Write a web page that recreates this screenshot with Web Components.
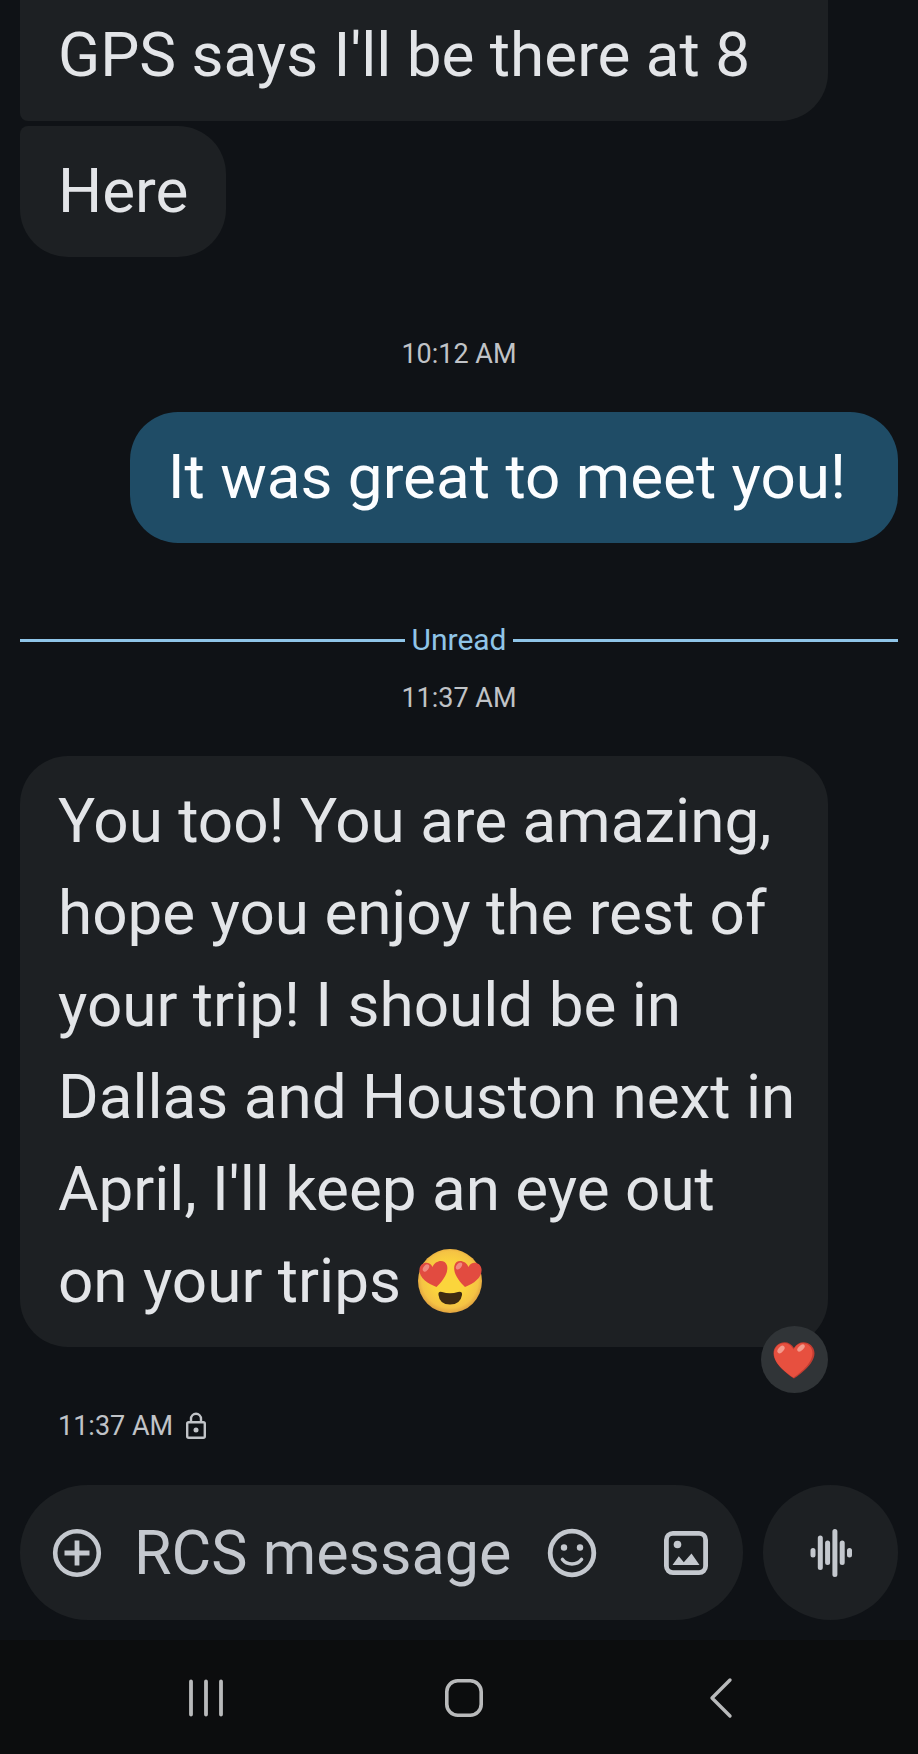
<!DOCTYPE html>
<html lang="en">
<head>
<meta charset="UTF-8">
<meta name="viewport" content="width=device-width, initial-scale=1.0">
<title>Messages</title>
<style>
    body {
        margin: 0;
        background: #0f1216;
        color: #e3e5e8;
        font-family: Roboto, "Liberation Sans", sans-serif;
    }
</style>
</head>
<body>
<chat-screen>
    <chat-bubble class="long joined-above joined-below">GPS says I'll be there at 8</chat-bubble>
    <chat-bubble class="joined-above">Here</chat-bubble>
    <chat-time class="section">10:12 AM</chat-time>
    <chat-bubble class="sent">It was great to meet you!</chat-bubble>
    <unread-divider>Unread</unread-divider>
    <chat-time>11:37 AM</chat-time>
    <chat-bubble class="long">You too! You are amazing, hope you enjoy the rest of your trip! I should be in Dallas and Houston next in April, I'll keep an eye out<br>on your trips <heart-eyes></heart-eyes><heart-reaction slot="reaction"></heart-reaction></chat-bubble>
    <message-status>11:37 AM</message-status>
    <message-composer slot="composer"></message-composer>
    <system-nav slot="nav"></system-nav>
</chat-screen>

<script>
class ChatScreen extends HTMLElement {
    connectedCallback() {
        this.attachShadow({ mode: 'open' });
        this.shadowRoot.innerHTML = `
            <style>
                :host {
                    display: flex;
                    flex-direction: column;
                    height: 100vh;
                    overflow: hidden;
                }
                main {
                    flex: 1;
                    min-height: 0;
                    display: flex;
                    flex-direction: column;
                    justify-content: flex-end;
                    padding: 0 20px;
                }
            </style>
            <main><slot></slot></main>
            <slot name="composer"></slot>
            <slot name="nav"></slot>
        `;
    }
}

class ChatBubble extends HTMLElement {
    connectedCallback() {
        this.attachShadow({ mode: 'open' });
        this.shadowRoot.innerHTML = `
            <style>
                :host {
                    display: block;
                    flex-shrink: 0;
                    box-sizing: border-box;
                    position: relative;
                    align-self: flex-start;
                    max-width: 92%;
                    padding: 19px 38px 20px;
                    border-radius: 48px;
                    background: #1d2023;
                    font-size: 62px;
                    line-height: 92px;
                }
                :host(.long) {
                    width: 92%;
                    padding-right: 24px;
                }
                :host(.joined-below) {
                    border-bottom-left-radius: 8px;
                    margin-bottom: 5px;
                }
                :host(.joined-above) {
                    border-top-left-radius: 8px;
                }
                :host(.long.joined-above) {
                    border-top-right-radius: 8px;
                }
                :host(.sent) {
                    align-self: flex-end;
                    padding-right: 52px;
                    background: #1f4c66;
                    color: #fbfdff;
                }
            </style>
            <slot></slot>
            <slot name="reaction"></slot>
        `;
    }
}

class ChatTime extends HTMLElement {
    connectedCallback() {
        this.attachShadow({ mode: 'open' });
        this.shadowRoot.innerHTML = `
            <style>
                :host {
                    display: block;
                    flex-shrink: 0;
                    margin-bottom: 38px;
                    text-align: center;
                    color: #c0c3c7;
                    font-size: 27px;
                    line-height: 40px;
                }
                :host(.section) {
                    margin-top: 77px;
                }
            </style>
            <slot></slot>
        `;
    }
}

class UnreadDivider extends HTMLElement {
    connectedCallback() {
        this.attachShadow({ mode: 'open' });
        this.shadowRoot.innerHTML = `
            <style>
                :host {
                    display: flex;
                    flex-shrink: 0;
                    align-items: center;
                    gap: 6px;
                    margin: 77px 0 18px;
                    color: #8fc5e8;
                    font-size: 30px;
                    line-height: 40px;
                }
                :host::before,
                :host::after {
                    content: "";
                    flex: 1;
                    height: 3px;
                    background: #8fc5e8;
                }
            </style>
            <slot></slot>
        `;
    }
}

class MessageStatus extends HTMLElement {
    connectedCallback() {
        this.attachShadow({ mode: 'open' });
        this.shadowRoot.innerHTML = `
            <style>
                :host {
                    display: flex;
                    flex-shrink: 0;
                    align-items: center;
                    gap: 12px;
                    margin: 59px 0 39px;
                    padding-left: 38px;
                    color: #c0c3c7;
                    font-size: 27px;
                    line-height: 40px;
                }
                svg { display: block; }
            </style>
            <slot></slot>
            <svg width="22" height="28" viewBox="0 0 22 28" fill="none" stroke="currentColor" stroke-width="2.4" role="img" aria-label="Encrypted">
                <rect x="2.2" y="10.2" width="17.6" height="15.6" rx="1.5"/>
                <path d="M6 10V6.8a5 5 0 0 1 10 0V10"/>
                <circle cx="11" cy="18" r="2.5" fill="currentColor" stroke="none"/>
            </svg>
        `;
    }
}

class HeartEyes extends HTMLElement {
    connectedCallback() {
        this.attachShadow({ mode: 'open' });
        this.shadowRoot.innerHTML = `
            <style>
                :host { display: inline-block; height: 66px; vertical-align: -12px; }
                svg { display: block; }
            </style>
            <svg width="68" height="66" viewBox="0 0 68 66" role="img" aria-label="Smiling face with heart eyes">
                <defs>
                    <radialGradient id="face" cx="50%" cy="48%" r="52%">
                        <stop offset="0.5" stop-color="#fbd53c"/>
                        <stop offset="0.85" stop-color="#f5c344"/>
                        <stop offset="1" stop-color="#e0a23f"/>
                    </radialGradient>
                </defs>
                <circle cx="34" cy="33" r="32" fill="url(#face)"/>
                <path d="M20.500 39 C11 35.500 2.500 29 3.500 21 C4.500 14 13.500 12.500 16.500 19 C19 12 29 10.500 31 17.500 C33 25 26 34 20.500 39Z" fill="#e24b40"/>
                <path d="M49 39 C58.500 35.500 66.500 29 65.500 21 C64.500 14 55.500 12.500 52.500 19 C50 12 40 10.500 38.500 17.500 C36.500 25 43.500 34 49 39Z" fill="#e24b40"/>
                <ellipse cx="10" cy="20" rx="2.600" ry="4" transform="rotate(38 10 20)" fill="#f08a80"/>
                <ellipse cx="43" cy="18" rx="2.400" ry="4" transform="rotate(38 43 18)" fill="#f08a80"/>
                <path d="M26 44 Q34 46.500 42 44 Q46.500 43 46 47 Q44.500 56.500 34 56.500 Q23.500 56.500 22.500 47 Q22 43 26 44Z" fill="#3d2a12"/>
            </svg>
        `;
    }
}

class HeartReaction extends HTMLElement {
    connectedCallback() {
        this.attachShadow({ mode: 'open' });
        this.shadowRoot.innerHTML = `
            <style>
                :host {
                    position: absolute;
                    right: 0;
                    bottom: -46px;
                }
                button {
                    display: flex;
                    align-items: center;
                    justify-content: center;
                    width: 67px;
                    height: 67px;
                    padding: 0;
                    border: 0;
                    border-radius: 50%;
                    background: #303437;
                    cursor: pointer;
                }
            </style>
            <button type="button" aria-label="Red heart reaction">
                <svg width="42" height="38" viewBox="0 0 42 38">
                    <path d="M21 37.500 C16 34 1 24 0.500 12.500 C0.300 1.500 15 -3.500 21 7 C27 -3.500 41.700 1.500 41.500 12.500 C41 24 26 34 21 37.500Z" fill="#c23c31"/>
                    <path d="M20.500 36.500 C15 33 1 23.500 1 12.500 C1 2 15 -2 20.500 8.500 C26 -2 39.500 2 39.500 12 C39.500 23 25.500 33 20.500 36.500Z" fill="#e7503f"/>
                    <ellipse cx="8" cy="8.500" rx="2.600" ry="4.500" transform="rotate(42 8 8.500)" fill="#f39a8c"/>
                    <ellipse cx="28" cy="7" rx="2.400" ry="4.500" transform="rotate(48 28 7)" fill="#f39a8c"/>
                </svg>
            </button>
        `;
    }
}

class MessageComposer extends HTMLElement {
    connectedCallback() {
        this.attachShadow({ mode: 'open' });
        this.shadowRoot.innerHTML = `
            <style>
                :host {
                    display: flex;
                    flex-shrink: 0;
                    gap: 20px;
                    padding: 0 20px 20px;
                    color: #c4c8ce;
                }
                .field {
                    flex: 1;
                    min-width: 0;
                    display: flex;
                    align-items: center;
                    box-sizing: border-box;
                    height: 135px;
                    padding: 0 32px;
                    border-radius: 68px;
                    background: #1d2023;
                }
                input {
                    flex: 1;
                    min-width: 0;
                    height: 92px;
                    margin: 0 0 0 32px;
                    padding: 0;
                    border: 0;
                    outline: none;
                    background: none;
                    color: inherit;
                    font: inherit;
                    font-size: 61px;
                }
                input::placeholder {
                    color: inherit;
                    opacity: 1;
                }
                button {
                    display: flex;
                    flex-shrink: 0;
                    align-items: center;
                    justify-content: center;
                    width: 50px;
                    height: 50px;
                    padding: 0;
                    border: 0;
                    background: none;
                    color: inherit;
                    cursor: pointer;
                }
                .gallery { margin-left: 64px; }
                .voice {
                    width: 135px;
                    height: 135px;
                    border-radius: 50%;
                    background: #1d2023;
                }
            </style>
            <div class="field">
                <button type="button" aria-label="Attach">
                    <svg width="50" height="50" viewBox="0 0 50 50" fill="none" stroke="currentColor">
                        <circle cx="25" cy="25" r="21.800" stroke-width="4.600"/>
                        <path d="M25 12.500v25M12.500 25h25" stroke-width="4.800"/>
                    </svg>
                </button>
                <input type="text" aria-label="Message" placeholder="RCS message">
                <button type="button" aria-label="Emoji">
                    <svg width="50" height="50" viewBox="0 0 50 50" fill="none" stroke="currentColor">
                        <circle cx="25" cy="25" r="21.800" stroke-width="4.800"/>
                        <circle cx="17" cy="19.500" r="3.200" fill="currentColor" stroke="none"/>
                        <circle cx="33" cy="19.500" r="3.200" fill="currentColor" stroke="none"/>
                        <path d="M15.500 31.500Q19 36 25 36T34.500 31.500" stroke-width="3.600" stroke-linecap="round"/>
                    </svg>
                </button>
                <button type="button" class="gallery" aria-label="Gallery">
                    <svg width="50" height="50" viewBox="0 0 50 50" fill="none" stroke="currentColor">
                        <rect x="5.400" y="5.400" width="39.200" height="39.200" rx="6.500" stroke-width="4.800"/>
                        <circle cx="16.500" cy="16.500" r="3.800" fill="currentColor" stroke="none"/>
                        <path d="M11.500 37L17.800 28.200L22.800 34.200L30.500 25.500L38.500 37Z" fill="currentColor" stroke="none"/>
                    </svg>
                </button>
            </div>
            <button type="button" class="voice" aria-label="Voice message">
                <svg width="50" height="50" viewBox="0 0 50 50" fill="none" stroke="currentColor" stroke-width="5" stroke-linecap="round">
                    <path d="M7 22.500v4.500M14.300 10v29.500M21.600 15v19.500M28.900 3.500v43M36.200 15v19.500M43.500 22.500v4.500"/>
                </svg>
            </button>
        `;
    }
}

class SystemNav extends HTMLElement {
    connectedCallback() {
        this.attachShadow({ mode: 'open' });
        this.shadowRoot.innerHTML = `
            <style>
                :host {
                    display: block;
                    flex-shrink: 0;
                    background: #0c0d0e;
                    color: #b9babb;
                }
                nav {
                    display: flex;
                    height: 114px;
                    padding: 0 68px 0 77px;
                }
                button {
                    flex: 1;
                    display: flex;
                    align-items: center;
                    justify-content: center;
                    padding: 2px 0 0;
                    border: 0;
                    background: none;
                    color: inherit;
                    cursor: pointer;
                }
            </style>
            <nav aria-label="System">
                <button type="button" aria-label="Recent apps">
                    <svg width="40" height="44" viewBox="0 0 40 44" fill="none" stroke="currentColor" stroke-width="3.800" stroke-linecap="round">
                        <path d="M5 5.500v33M20 5.500v33M35 5.500v33"/>
                    </svg>
                </button>
                <button type="button" aria-label="Home">
                    <svg width="40" height="40" viewBox="0 0 40 40" fill="none" stroke="currentColor" stroke-width="3.600">
                        <rect x="2.800" y="2.800" width="34.400" height="34.400" rx="11"/>
                    </svg>
                </button>
                <button type="button" aria-label="Back">
                    <svg width="24" height="42" viewBox="0 0 24 42" fill="none" stroke="currentColor" stroke-width="3.400" stroke-linecap="round" stroke-linejoin="round">
                        <path d="M21 3L3 21L21 39"/>
                    </svg>
                </button>
            </nav>
        `;
    }
}

customElements.define('chat-screen', ChatScreen);
customElements.define('chat-bubble', ChatBubble);
customElements.define('chat-time', ChatTime);
customElements.define('unread-divider', UnreadDivider);
customElements.define('message-status', MessageStatus);
customElements.define('heart-eyes', HeartEyes);
customElements.define('heart-reaction', HeartReaction);
customElements.define('message-composer', MessageComposer);
customElements.define('system-nav', SystemNav);
</script>
</body>
</html>
